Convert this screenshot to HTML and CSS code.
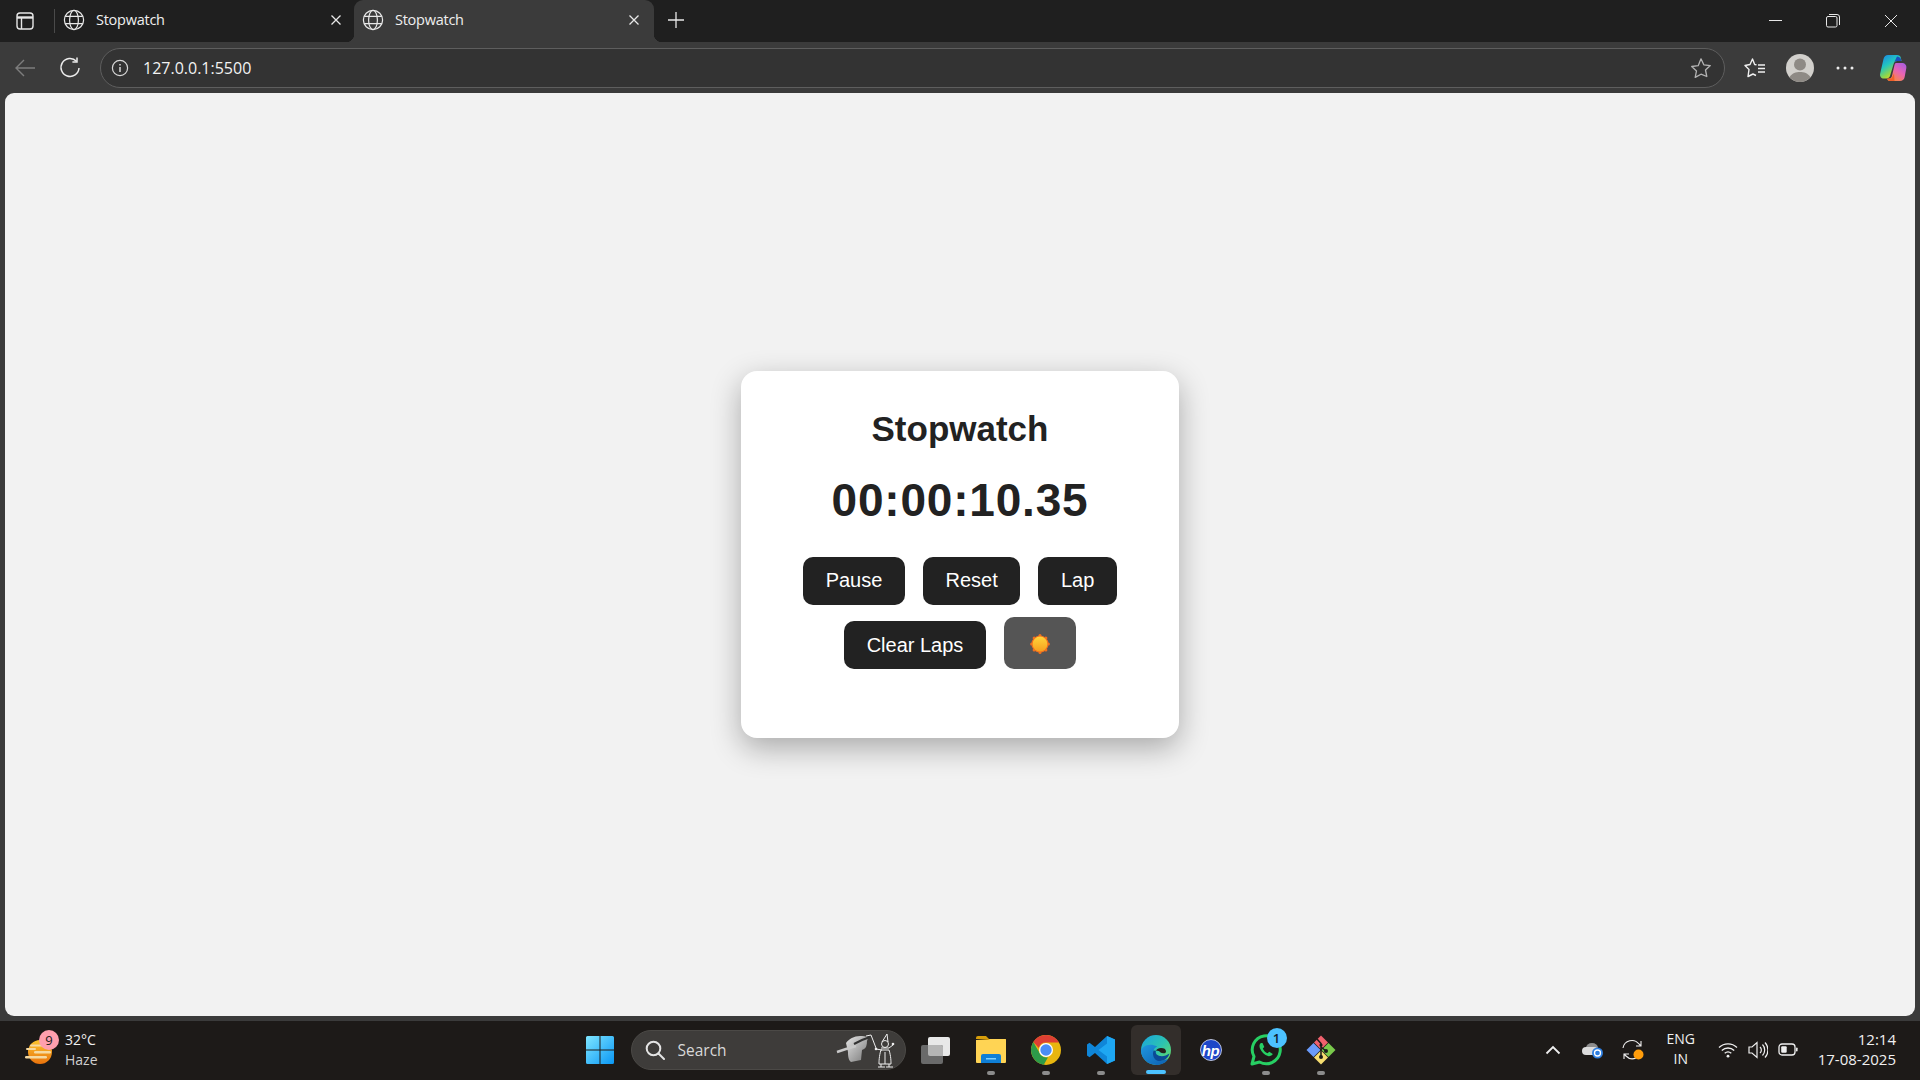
FILE: index.html
```html
<!DOCTYPE html>
<html lang="en">
<head>
<meta charset="utf-8">
<title>Stopwatch</title>
<link rel="stylesheet" href="styles.css">
</head>
<body>
<div class="tabstrip">
  <div class="panel-btn">
    <svg width="20" height="20" viewBox="0 0 20 20" fill="none" stroke="#e6e6e6" stroke-width="1.4"><rect x="2" y="2" width="16" height="16" rx="3"/><path d="M2 6.5h16" stroke-width="2.4"/><path d="M6.5 6.5V18"/></svg>
  </div>
  <div class="tab">
    <svg class="globe" width="22" height="22" viewBox="0 0 22 22" fill="none" stroke="#e8e8e8" stroke-width="1.2"><circle cx="11" cy="11" r="9.6"/><ellipse cx="11" cy="11" rx="4.4" ry="9.6"/><path d="M2.2 7.4h17.6M2.2 14.6h17.6"/></svg>
    <span class="tab-title">Stopwatch</span>
    <svg class="tab-x" width="12" height="12" viewBox="0 0 12 12" stroke="#e8e8e8" stroke-width="1.3"><path d="M1.5 1.5l9 9M10.5 1.5l-9 9"/></svg>
  </div>
  <div class="tab active">
    <svg class="globe" width="22" height="22" viewBox="0 0 22 22" fill="none" stroke="#e8e8e8" stroke-width="1.2"><circle cx="11" cy="11" r="9.6"/><ellipse cx="11" cy="11" rx="4.4" ry="9.6"/><path d="M2.2 7.4h17.6M2.2 14.6h17.6"/></svg>
    <span class="tab-title">Stopwatch</span>
    <svg class="tab-x" width="12" height="12" viewBox="0 0 12 12" stroke="#e8e8e8" stroke-width="1.3"><path d="M1.5 1.5l9 9M10.5 1.5l-9 9"/></svg>
  </div>
  <div class="new-tab">
    <svg width="18" height="18" viewBox="0 0 18 18" stroke="#e8e8e8" stroke-width="1.3"><path d="M9 1v16M1 9h16"/></svg>
  </div>
  <div class="win-controls">
    <div class="win-btn min"><svg width="14" height="14" viewBox="0 0 14 14" stroke="#e8e8e8" stroke-width="1"><path d="M0 6.5h13"/></svg></div>
    <div class="win-btn"><svg width="14" height="14" viewBox="0 0 14 14" fill="none" stroke="#e8e8e8" stroke-width="1"><rect x="0.5" y="2.5" width="10.5" height="10.5" rx="1.5"/><path d="M3 .5h8a2.5 2.5 0 0 1 2.5 2.5v8"/></svg></div>
    <div class="win-btn"><svg width="14" height="14" viewBox="0 0 14 14" stroke="#e8e8e8" stroke-width="1"><path d="M1 1l12 12M13 1L1 13"/></svg></div>
  </div>
</div>

<div class="toolbar">
  <div class="tool-btn back">
    <svg width="22" height="22" viewBox="0 0 22 22" fill="none" stroke="#7d7d7d" stroke-width="1.4"><path d="M21 11H2M10 3l-8 8 8 8"/></svg>
  </div>
  <div class="tool-btn reload">
    <svg width="22" height="22" viewBox="0 0 22 22" fill="none" stroke="#ececec" stroke-width="1.5"><path d="M17.5 4.2A9 9 0 1 0 20 11"/><path d="M18 .5v4.4h-4.6"/></svg>
  </div>
  <div class="address">
    <svg class="info" width="18" height="18" viewBox="0 0 18 18" fill="none" stroke="#d8d8d8" stroke-width="1.2"><circle cx="9" cy="9" r="7.6"/><path d="M9 8v5" stroke-width="1.5"/><path d="M9 5v1.5" stroke-width="1.5"/></svg>
    <span class="url">127.0.0.1:5500</span>
    <svg class="addr-star" width="22" height="22" viewBox="0 0 22 22" fill="none" stroke="#b4b4b4" stroke-width="1.3" stroke-linejoin="round"><path d="M11 1.8l2.8 6 6.5.8-4.8 4.4 1.3 6.5L11 17.2l-5.8 3.2 1.3-6.5-4.8-4.4 6.500-.8z"/></svg>
  </div>
  <div class="tool-right">
    <div class="tool-slot"><svg width="22" height="22" viewBox="0 0 22 22" fill="none" stroke="#f0f0f0" stroke-width="1.4" stroke-linejoin="round"><path d="M12.500 7.800L10.700 7.500 8.500 2 6 7.500 1 8.500 5 12.500 4 19.500 9 17 12 18.500"/><path d="M14 8h7M14 11.500h7M14 15h7"/></svg></div>
    <div class="tool-slot"><svg width="28" height="28" viewBox="0 0 28 28"><circle cx="14" cy="14" r="14" fill="#d2d0cc"/><circle cx="14" cy="10.500" r="6" fill="#8e8a85"/><path d="M3.500 23.300C6 19 10 18 14 18s8 1 10.500 5.300A14 14 0 0 1 14 28 14 14 0 0 1 3.500 23.300z" fill="#8e8a85"/></svg></div>
    <div class="tool-slot"><svg width="18" height="4" viewBox="0 0 18 4" fill="#ececec"><circle cx="2" cy="2" r="1.500"/><circle cx="9" cy="2" r="1.500"/><circle cx="16" cy="2" r="1.500"/></svg></div>
    <div class="tool-slot copilot">
      <svg width="28" height="28" viewBox="0 0 28 28">
        <defs>
          <linearGradient id="cpA" x1="0" y1="0" x2="0.6" y2="1"><stop offset="0" stop-color="#1a7fe8"/><stop offset=".45" stop-color="#22c6c0"/><stop offset=".8" stop-color="#9bd83f"/><stop offset="1" stop-color="#f3d23a"/></linearGradient>
          <linearGradient id="cpB" x1="1" y1="0" x2="0.3" y2="1"><stop offset="0" stop-color="#a05ce6"/><stop offset=".5" stop-color="#e864b4"/><stop offset="1" stop-color="#f98a3a"/></linearGradient>
        </defs>
        <path d="M9 1h9c2 0 3.500 1 3.800 2.800L22.500 7h-4.300c-2 0-3 1-3.600 3L11 22c-.6 1.600-1.800 2.400-3.500 2.400H5C2 24.400.5 22.300 1.200 19.400L4.500 5C5.200 2.400 6.800 1 9 1z" fill="url(#cpA)"/>
        <path d="M17 9h5.500c3.500 0 5.300 2 4.800 5.200l-1.700 9C25 25.800 23.300 27 21 27H11c-1.500 0-2.500-.8-3-2.300h1.500c1.700 0 2.800-.8 3.400-2.500L15.500 11c.3-1.200.8-2 1.500-2z" fill="url(#cpB)"/>
        <path d="M18 2.500c1.800.3 3.200 1 3.800 2.300l.7 2.200h-4.200c-1.300 0-2.300.3-3 1z" fill="#1a4fc0"/>
        <path d="M8.500 24.500h4l2.500-5 .5 7.500H11c-1.200 0-2-1-2.500-2.500z" fill="#f0602a"/>
      </svg>
    </div>
  </div>
</div>

<main class="viewport">
  <section class="card">
    <h1 class="title">Stopwatch</h1>
    <div class="time">00:00:10.35</div>
    <div class="controls">
      <button class="btn raised">Pause</button>
      <button class="btn raised">Reset</button>
      <button class="btn raised">Lap</button>
      <button class="btn">Clear Laps</button>
      <button class="btn theme">
        <svg width="20" height="20" viewBox="0 0 20 20">
          <defs><linearGradient id="sunG" x1="0.5" y1="0" x2="0.5" y2="1"><stop offset="0" stop-color="#ffd43a"/><stop offset="1" stop-color="#f6a01f"/></linearGradient></defs>
          <g fill="#f0701e"><circle cx="10" cy="10" r="8.600"/><circle cx="10" cy="1.600" r="1.500"/><circle cx="10" cy="18.400" r="1.500"/><circle cx="1.600" cy="10" r="1.500"/><circle cx="18.400" cy="10" r="1.500"/><circle cx="4.100" cy="4.100" r="1.500"/><circle cx="15.900" cy="4.100" r="1.500"/><circle cx="4.100" cy="15.900" r="1.500"/><circle cx="15.900" cy="15.900" r="1.500"/></g>
          <circle cx="10" cy="10" r="7.400" fill="url(#sunG)"/>
        </svg>
      </button>
    </div>
  </section>
</main>

<footer class="taskbar">
  <div class="weather">
    <div class="weather-icon">
      <svg width="30" height="32" viewBox="0 0 30 32">
        <defs><linearGradient id="wx" x1="0" y1="0" x2="0" y2="1"><stop offset="0" stop-color="#fbc52f"/><stop offset="1" stop-color="#e9720c"/></linearGradient></defs>
        <circle cx="15" cy="17" r="12" fill="url(#wx)"/>
        <g fill="#f5d9a0"><rect x="1" y="13" width="10" height="2" rx="1"/><rect x="9" y="16" width="17" height="2.500" rx="1.200"/><rect x="0" y="21" width="22" height="2.500" rx="1.200"/><rect x="5" y="9.500" width="18" height="2" rx="1"/></g>
      </svg>
      <span class="wx-badge">9</span>
    </div>
    <div class="wx-text"><span class="wx-temp">32°C</span><span class="wx-desc">Haze</span></div>
  </div>

  <div class="apps">
    <div class="slot">
      <svg width="30" height="30" viewBox="0 0 30 30">
        <defs><linearGradient id="winG" x1="0" y1="0" x2="1" y2="1"><stop offset="0" stop-color="#7fe6ff"/><stop offset="1" stop-color="#0a97f5"/></linearGradient></defs>
        <path d="M1 2.500A1.500 1.500 0 0 1 2.500 1h12v13.500H1zM15.500 1h12A1.500 1.500 0 0 1 29 2.500v12H15.500zM1 15.500h13.500V29h-12A1.500 1.500 0 0 1 1 27.500zM15.500 15.500H29v12a1.500 1.500 0 0 1-1.500 1.500h-12z" fill="url(#winG)"/>
      </svg>
    </div>
    <div class="search">
      <svg class="search-ico" width="20" height="20" viewBox="0 0 20 20" fill="none" stroke="#e4e4e4" stroke-width="2"><circle cx="8.500" cy="8.500" r="6.800"/><path d="M13.500 13.500l5.500 5.500" stroke-linecap="round"/></svg>
      <span class="search-text">Search</span>
      <svg class="doodle" width="60" height="40" viewBox="0 0 60 40" fill="none">
        <defs><linearGradient id="hand" x1="0" y1="0" x2="1" y2="1"><stop offset="0" stop-color="#e6e6e6"/><stop offset="1" stop-color="#777"/></linearGradient></defs>
        <path d="M10 13c3-4 8-7 14-7 3 0 6 0 8 2l-1 3c0 4-1 7-3 8l-2 1-1 10-10 2c-3-2-3-8-3-10z" fill="url(#hand)"/>
        <path d="M1 22l9-3 10-3" stroke="#c9c9c9" stroke-width="2.400"/>
        <path d="M18 14l8-4 8-3" stroke="#333" stroke-width="2"/>
        <path d="M30 6l5-1 5 13" stroke="#eee" stroke-width="1"/>
        <circle cx="40" cy="19" r="1.300" fill="#eee"/>
        <g stroke="#eee" stroke-width="1">
          <path d="M46 12l5-8 1 8"/><circle cx="49" cy="14" r="3.500"/>
          <path d="M45 18l8 0M40 19l6 1M53 18l4-3M45 20c-2 6-2 12-2 14h12c0-2 0-8-2-14z"/>
          <path d="M49 22v12M42 37h7M50 37h7M45 34v3M53 34v3"/>
        </g>
        <circle cx="57" cy="14" r="1.300" fill="#eee"/>
      </svg>
    </div>
    <div class="slot">
      <svg width="32" height="30" viewBox="0 0 32 30">
        <rect x="8" y="2" width="22" height="19" rx="2" fill="#e8e8e8"/>
        <rect x="1" y="10" width="22" height="19" rx="2" fill="#6a6a6a"/>
        <path d="M8 10h13a2 2 0 0 1 2 2v9H10a2 2 0 0 1-2-2z" fill="#b5b5b5"/>
      </svg>
    </div>
    <div class="slot pinned">
      <svg width="32" height="30" viewBox="0 0 32 30">
        <path d="M1 3a2 2 0 0 1 2-2h8l3 3h-13z" fill="#d89e0a"/>
        <path d="M1 4h30v1H13z" fill="#d89e0a"/>
        <path d="M1 5h12l2-1h15a1 1 0 0 1 1 1v22a1 1 0 0 1-1 1H2a1 1 0 0 1-1-1z" fill="#ffd454"/>
        <path d="M6 28V21a2 2 0 0 1 2-2h16a2 2 0 0 1 2 2v7z" fill="#0f7fd6"/>
        <rect x="11" y="23" width="10" height="1.500" fill="#7ed0ff"/>
      </svg>
      <span class="dot"></span>
    </div>
    <div class="slot pinned">
      <svg width="30" height="30" viewBox="0 0 30 30">
        <circle cx="15" cy="15" r="15" fill="#e8b60f"/>
        <path d="M15 0a15 15 0 0 1 13 7.500H15a7.500 7.500 0 0 0-7.200 5.400L2.300 7A15 15 0 0 1 15 0z" fill="#de3f33"/>
        <path d="M2.300 7l6 10.500A7.500 7.500 0 0 0 17 22.200L12.800 29.800A15 15 0 0 1 2.300 7z" fill="#2d9b49"/>
        <circle cx="15" cy="15" r="7" fill="#fff"/>
        <circle cx="15" cy="15" r="5.700" fill="#4a8df6"/>
      </svg>
      <span class="dot"></span>
    </div>
    <div class="slot pinned">
      <svg width="30" height="30" viewBox="0 0 30 30">
        <path d="M21 1l8 3.500v21L21 29 9 18l-5.500 4.200L1 20.500v-11L3.500 7.800 9 12z" fill="#0f86d8"/>
        <path d="M21 1l8 3.500v21L21 29zM21 8.500L12.500 15l8.500 6.500z" fill="#1ea7f2" fill-rule="evenodd"/>
      </svg>
      <span class="dot"></span>
    </div>
    <div class="slot current">
      <svg width="30" height="30" viewBox="0 0 30 30">
        <defs>
          <linearGradient id="edgeA" x1="0" y1="0" x2="1" y2="0.900"><stop offset="0" stop-color="#1aa3e0"/><stop offset=".55" stop-color="#2cc4b0"/><stop offset="1" stop-color="#6fdc5a"/></linearGradient>
          <linearGradient id="edgeB" x1="0" y1="0" x2="1" y2="1"><stop offset="0" stop-color="#1f97e0"/><stop offset="1" stop-color="#0d5fb0"/></linearGradient>
        </defs>
        <circle cx="15" cy="15" r="15" fill="url(#edgeA)"/>
        <path d="M0 15A15 15 0 0 0 15 30c6 0 10-2.300 12.500-6.500-2.500 1.500-5.500 2-8 1.500C14 24 11 20 12.500 15.500c.6-1.800 2-3.300 3.800-4C11 9 6 9.500 2.500 12c-1 1-1.800 1.700-2.500 3z" fill="url(#edgeB)"/>
        <path d="M15 15.800c1-1.800 2.500-2.800 5-2.800 3 0 5 1 5 3.500 0 1-.8 1.800-2.400 1.800-3 0-3.600-1.300-4-1.800-.7-.8-2-1-3.600-.7z" fill="#26201d"/>
        <path d="M17 26c-4-1.500-6-5.500-4.500-10.500l2.500.3c-1 2.600 1 4.700 4 5.200 3.500.5 6.500-.5 9.500-2.500-1.500 5-5 7.500-11.500 7.500z" fill="#0b4a96"/>
      </svg>
      <span class="bar"></span>
    </div>
    <div class="slot">
      <svg width="22" height="22" viewBox="0 0 22 22"><circle cx="11" cy="11" r="10.500" fill="#1d46c8" stroke="#dfe5f5" stroke-width="0.800"/></svg>
      <span class="hp-text">hp</span>
    </div>
    <div class="slot pinned">
      <svg width="32" height="32" viewBox="0 0 32 32" fill="none">
        <path d="M2 30l2-7.500A14 14 0 1 1 9.500 28z" stroke="#27cf63" stroke-width="3" stroke-linejoin="round"/>
        <path d="M11 9c-1.500 1-2 3-1 5.500 1.500 3.500 4.500 6.500 8 7.500 2 .6 4-.4 4.800-2l-3.500-2.300-1.800 1.600c-2-.7-3.800-2.600-4.700-4.800l1.500-1.600L12.500 9z" fill="#27cf63"/>
      </svg>
      <span class="app-badge">1</span>
      <span class="dot"></span>
    </div>
    <div class="slot pinned">
      <svg width="30" height="30" viewBox="0 0 30 30">
        <path d="M15 .5L22 7.500 15 14.500 8 7.500z" fill="#f0616d"/>
        <path d="M22.500 8L29.500 15 22.500 22 15.500 15z" fill="#79c94b"/>
        <path d="M15 15.500L22 22.500 15 29.500 8 22.500z" fill="#f6dd70"/>
        <path d="M7.500 8L14.500 15 7.500 22 .5 15z" fill="#6a9bfa"/>
        <path d="M11 4l4 4.500v14.500M15 12l5 4" stroke="#1a1a1a" stroke-width="1.500" fill="none"/>
        <circle cx="15" cy="22" r="2" fill="#1a1a1a"/><circle cx="20" cy="16" r="2" fill="#1a1a1a"/><circle cx="15" cy="10" r="1.600" fill="#1a1a1a"/>
      </svg>
      <span class="dot"></span>
    </div>
  </div>

  <div class="tray">
    <div class="tray-slot wide"><svg width="16" height="10" viewBox="0 0 16 10" fill="none" stroke="#efefef" stroke-width="1.800"><path d="M1.500 8.500L8 2l6.500 6.500"/></svg></div>
    <div class="tray-slot wide">
      <svg width="22" height="18" viewBox="0 0 22 18"><ellipse cx="10" cy="7" rx="6" ry="5" fill="#8d8d8d"/><path d="M4 14a4 4 0 0 1 0-8h8a4 4 0 0 1 4 4v4z" fill="#dcdcdc"/><circle cx="15.500" cy="12" r="5.500" fill="#2f7fe0"/><circle cx="15.500" cy="12" r="3" fill="none" stroke="#fff" stroke-width="1.300"/></svg>
    </div>
    <div class="tray-slot wide">
      <svg width="22" height="22" viewBox="0 0 22 22" fill="none" stroke="#efefef" stroke-width="1.100"><path d="M1 9a9 9 0 0 1 16-4l2 2M19 2v5h-5M14 19a9 9 0 0 1-10-2l-2-2M2 20v-5h5"/><circle cx="16.500" cy="15.500" r="5" fill="#ff9d0b" stroke="none"/></svg>
    </div>
    <div class="lang"><span>ENG</span><span>IN</span></div>
    <div class="tray-slot">
      <svg width="20" height="16" viewBox="0 0 20 16" fill="none" stroke="#efefef" stroke-width="1.300"><path d="M1 5.500a13 13 0 0 1 18 0M3.800 8.500a9 9 0 0 1 12.400 0M6.700 11.300a5 5 0 0 1 6.600 0"/><circle cx="10" cy="14.200" r="1.400" fill="#efefef" stroke="none"/></svg>
    </div>
    <div class="tray-slot">
      <svg width="20" height="18" viewBox="0 0 20 18" fill="none" stroke="#efefef" stroke-width="1.200"><path d="M1 6h3l5-4.500v15L4 12H1z"/><path d="M12 6a4 4 0 0 1 0 6M14.500 3.500a8 8 0 0 1 0 11M17 1.500a11 11 0 0 1 0 15"/></svg>
    </div>
    <div class="tray-slot">
      <svg width="20" height="14" viewBox="0 0 20 14" fill="none"><rect x="1" y="1" width="16" height="11" rx="3" stroke="#efefef" stroke-width="1.300"/><rect x="3.200" y="3.200" width="5.500" height="6.600" rx="1" fill="#efefef"/><rect x="18" y="4.500" width="1.600" height="4" rx=".8" fill="#efefef"/></svg>
    </div>
    <div class="clock"><span>12:14</span><span>17-08-2025</span></div>
  </div>
</footer>
</body>
</html>
```

FILE: styles.css
```css
* { box-sizing: border-box; }

html, body {
  height: 100%;
}

body {
  margin: 0;
  height: 100vh;
  overflow: hidden;
  display: flex;
  flex-direction: column;
  background: #3b3b3b;
  font-family: "Open Sans", "Liberation Sans", sans-serif;
  color: #f0f0f0;
}

svg { display: block; flex: none; }

/* Browser tab strip */
.tabstrip {
  height: 42px;
  flex: none;
  display: flex;
  align-items: stretch;
  background: #1f1f1f;
}

.panel-btn {
  width: 55px;
  display: flex;
  align-items: center;
  justify-content: center;
  padding-right: 6px;
  position: relative;
}

.panel-btn::after {
  content: "";
  position: absolute;
  right: 0;
  top: 9px;
  bottom: 9px;
  width: 1px;
  background: #4a4a4a;
}

.tab {
  width: 299px;
  display: flex;
  align-items: center;
  padding: 0 12px 3px 8px;
  position: relative;
  font-size: 14.5px;
}

.tab.active {
  width: 300px;
  padding-right: 14px;
  background: #3b3b3b;
  border-radius: 9px 9px 0 0;
}

.tab.active::before,
.tab.active::after {
  content: "";
  position: absolute;
  bottom: 0;
  width: 8px;
  height: 8px;
}

.tab.active::before {
  left: -8px;
  background: radial-gradient(circle at 0 0, transparent 8px, #3b3b3b 8.5px);
}

.tab.active::after {
  right: -8px;
  background: radial-gradient(circle at 100% 0, transparent 8px, #3b3b3b 8.5px);
}

.globe { margin-right: 11px; }

.tab-title {
  flex: 1;
  letter-spacing: -0.25px;
  color: #efefef;
}

.new-tab {
  width: 44px;
  display: flex;
  align-items: center;
  justify-content: center;
  padding-bottom: 2px;
}

.win-controls {
  margin-left: auto;
  display: flex;
}

.win-btn {
  width: 58px;
  display: flex;
  align-items: center;
  justify-content: center;
}

.win-btn.min { padding-left: 2px; }

/* Browser toolbar */
.toolbar {
  height: 51px;
  flex: none;
  display: flex;
  align-items: center;
  background: #3b3b3b;
}

.tool-btn {
  width: 45px;
  height: 40px;
  display: flex;
  align-items: center;
  justify-content: center;
}

.back { margin-left: 2px; }

.reload { margin-right: 8px; }

.address {
  width: 1625px;
  height: 40px;
  display: flex;
  align-items: center;
  padding: 0 12px 0 10px;
  background: #333;
  border: 1.5px solid #5e5e5e;
  border-radius: 20px;
}

.url {
  flex: 1;
  margin-left: 14px;
  font-size: 16px;
  color: #f2f2f2;
}

.tool-right {
  display: flex;
  align-items: center;
  margin-left: 7px;
}

.tool-slot {
  width: 45px;
  display: flex;
  align-items: center;
  justify-content: center;
}

.tool-slot.copilot { margin-left: 3px; }

/* Page */
.viewport {
  flex: 1;
  min-height: 0;
  margin: 0 5px 5px;
  background: #f2f2f2;
  border-radius: 9px;
  display: flex;
  align-items: center;
  justify-content: center;
}

.card {
  width: 438px;
  background: #fff;
  border-radius: 16px;
  padding: 39px 32px 69px;
  box-shadow: 0 10px 30px rgba(0, 0, 0, 0.3);
  text-align: center;
  font-family: "Liberation Sans", Arial, sans-serif;
  color: #222;
}

.title {
  margin: 0 0 26px;
  font-size: 35px;
  font-weight: 700;
  line-height: 37px;
}

.time {
  margin-bottom: 29px;
  font-size: 46px;
  font-weight: 700;
  line-height: 55px;
  letter-spacing: 0.8px;
}

.controls {
  display: flex;
  flex-wrap: wrap;
  align-items: flex-end;
  justify-content: center;
  gap: 12px 18px;
}

.btn {
  height: 48px;
  padding: 0 22.6px;
  border: 0;
  border-radius: 10px;
  background: #222;
  color: #fff;
  font: 20px "Liberation Sans", Arial, sans-serif;
}

.btn.raised { padding-bottom: 2px; }

.btn.theme {
  width: 72px;
  height: 52px;
  padding: 2px 0 0;
  background: #555;
  display: flex;
  align-items: center;
  justify-content: center;
}

/* Windows taskbar */
.taskbar {
  height: 59px;
  flex: none;
  display: grid;
  grid-template-columns: 1fr auto 1fr;
  align-items: center;
  padding-bottom: 2px;
  background: #1d1a18;
}

.weather {
  display: flex;
  align-items: center;
  padding-left: 24px;
}

.weather-icon {
  position: relative;
  width: 41px;
  height: 40px;
  display: flex;
  align-items: center;
  padding: 2px 0 0 1px;
}

.wx-badge {
  position: absolute;
  left: 15px;
  top: 0;
  width: 20px;
  height: 20px;
  border-radius: 50%;
  background: #ff9fae;
  color: #1a1a1a;
  font-size: 13px;
  line-height: 20px;
  text-align: center;
}

.wx-text {
  display: flex;
  flex-direction: column;
  font-size: 14px;
  line-height: 20px;
}

.wx-desc { color: #cfcfcf; }

.apps {
  display: flex;
  align-items: center;
  gap: 5px;
  height: 100%;
}

.slot {
  position: relative;
  width: 50px;
  height: 50px;
  display: flex;
  align-items: center;
  justify-content: center;
  border-radius: 6px;
}

.slot.current {
  background: #332e2b;
}

.dot,
.bar {
  position: absolute;
  left: 50%;
  bottom: 0;
  transform: translateX(-50%);
  border-radius: 2px;
}

.dot {
  width: 8px;
  height: 4px;
  background: #8c8c8c;
}

.bar {
  width: 20px;
  height: 4px;
  bottom: 1px;
  background: #4cc2ff;
}

.hp-text {
  position: absolute;
  left: 0;
  right: 0;
  top: 50%;
  transform: translateY(-50%);
  text-align: center;
  color: #fff;
  font: italic 700 15px/1 "Liberation Sans", sans-serif;
  letter-spacing: -0.5px;
}

.app-badge {
  position: absolute;
  left: 26px;
  top: 3px;
  width: 20px;
  height: 20px;
  border-radius: 50%;
  background: #4cc2ff;
  color: #10202c;
  font-size: 13px;
  font-weight: 600;
  line-height: 20px;
  text-align: center;
}

.search {
  width: 275px;
  height: 40px;
  margin-left: 1px;
  display: flex;
  align-items: center;
  padding-left: 13px;
  background: #3e3c3a;
  border: 1px solid #4b4946;
  border-radius: 20px;
}

.search-ico { margin-right: 13px; }

.search-text {
  flex: 1;
  color: #d8d8d8;
  font-size: 15.5px;
}

.doodle { margin-right: 9px; }

.tray {
  display: flex;
  align-items: center;
  justify-content: flex-end;
  padding-right: 24px;
}

.tray-slot {
  width: 30px;
  display: flex;
  align-items: center;
  justify-content: center;
}

.tray-slot.wide { width: 40px; }

.lang,
.clock {
  display: flex;
  flex-direction: column;
  line-height: 20px;
  color: #f0f0f0;
  padding-bottom: 1px;
}

.lang {
  width: 56px;
  margin-right: 4px;
  align-items: center;
  font-size: 14px;
}

.clock {
  margin-left: 15px;
  align-items: flex-end;
  font-size: 15px;
}
```
